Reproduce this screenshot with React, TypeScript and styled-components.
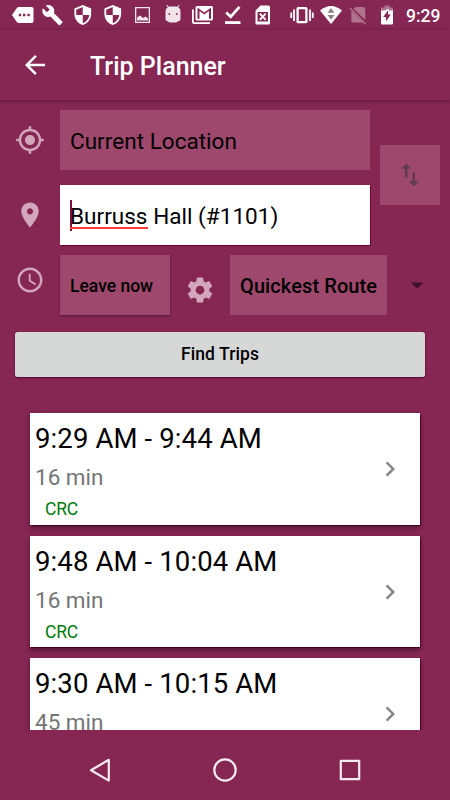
import React from "react";
import styled, { createGlobalStyle } from "styled-components";

const GlobalStyle = createGlobalStyle`
  * { box-sizing: border-box; }
  html, body { margin: 0; padding: 0; background: #862653; }
  body { font-family: Roboto, "Liberation Sans", sans-serif; }
  button, input { font-family: inherit; border: 0; margin: 0; padding: 0; border-radius: 0; }
`;

const Screen = styled.div`
  display: flex;
  flex-direction: column;
  width: 450px;
  height: 800px;
  overflow: hidden;
  background: #862653;
  color: #000;
`;

const StatusBar = styled.div`
  display: flex;
  align-items: center;
  flex: 0 0 30px;
  height: 30px;
  padding-left: 8px;
`;

const StatusSvg = styled.svg<{ $gap?: number; $opacity?: number }>`
  flex: none;
  width: 30px;
  height: 30px;
  margin-left: ${(p) => p.$gap ?? 0}px;
  opacity: ${(p) => p.$opacity ?? 1};
  fill: #fff;
`;

const Clock = styled.span`
  margin-left: 4px;
  padding-top: 2px;
  color: #fff;
  font-size: 17.5px;
  font-weight: 500;
  line-height: 28px;
`;

const AppBar = styled.header`
  display: flex;
  align-items: center;
  flex: 0 0 70px;
  padding: 0 20px;
  gap: 40px;
  box-shadow: 0 1px 4px rgba(0, 0, 0, 0.4);
`;

const BackButton = styled.button`
  display: flex;
  background: none;
`;

const Title = styled.h1`
  margin: 0;
  padding-top: 3px;
  color: #fff;
  font-size: 25px;
  font-weight: 500;
  line-height: 30px;
`;

const Planner = styled.main`
  display: flex;
  flex: 0 0 630px;
  flex-direction: column;
  height: 630px;
  padding: 10px 10px 0 15px;
  overflow: hidden;
`;

const Places = styled.div`
  display: flex;
  align-items: center;
  gap: 10px;
  margin-bottom: 10px;
`;

const PlaceFields = styled.div`
  display: flex;
  flex-direction: column;
  gap: 15px;
`;

const FieldRow = styled.label`
  display: flex;
  align-items: center;
  gap: 15px;
`;

const Glyph = styled.svg<{ $size?: number; $color?: string; $drop?: number }>`
  flex: none;
  display: block;
  width: ${(p) => p.$size ?? 30}px;
  height: ${(p) => p.$size ?? 30}px;
  margin-top: ${(p) => p.$drop ?? 0}px;
  fill: ${(p) => p.$color ?? "#d3a6bb"};
`;

const Field = styled.div<{ $focused?: boolean }>`
  display: flex;
  align-items: center;
  width: 310px;
  height: 60px;
  padding: 2px 10px 0;
  background: ${(p) => (p.$focused ? "#fff" : "#9d486c")};
  box-shadow: ${(p) => (p.$focused ? "0 0 1px 0.5px #6e0034" : "none")};
  font-size: 22.5px;
  letter-spacing: 0.03px;
  white-space: pre;
`;

const Caret = styled.span`
  width: 2px;
  height: 31px;
  margin: -2px -2px 0 0;
  background: #80103f;
`;

const Misspelled = styled.span`
  height: 26px;
  border-bottom: 2px solid #fb3a3c;
  line-height: 26px;
`;

const SwapButton = styled.button`
  display: flex;
  align-items: center;
  justify-content: center;
  width: 60px;
  height: 60px;
  margin-top: -5px;
  background: #9d486c;
`;

const Options = styled.div`
  display: flex;
  align-items: flex-start;
  height: 60px;
  gap: 15px;
`;

const OptionButton = styled.button<{ $width: number; $size: number; $spacing?: number; $raised?: boolean }>`
  width: ${(p) => p.$width}px;
  height: 60px;
  padding: 2px 0 0 10px;
  background: #9d486c;
  box-shadow: ${(p) => (p.$raised ? "0 1px 2px rgba(0, 0, 0, 0.4)" : "none")};
  color: #000;
  font-size: ${(p) => p.$size}px;
  font-weight: 500;
  letter-spacing: ${(p) => p.$spacing ?? 0}px;
  text-align: left;
  white-space: nowrap;
`;

const FindButton = styled.button`
  flex: none;
  width: 410px;
  height: 45px;
  margin-top: 16.5px;
  border-radius: 2.5px;
  background: #d6d8d7;
  box-shadow: 0 1px 2px #56082f, 0 0 1px #6e0034;
  color: #000;
  font-size: 17.5px;
  font-weight: 500;
  letter-spacing: 0.08px;
`;

const Results = styled.div`
  display: flex;
  flex: 0 0 353.5px;
  flex-direction: column;
  gap: 11px;
  width: 425px;
  padding: 36.8px 20px 0 15px;
  overflow: hidden;
`;

const Card = styled.article`
  display: flex;
  flex: 0 0 111.5px;
  align-items: center;
  justify-content: space-between;
  padding: 0 15px 0 5px;
  background: #fff;
  box-shadow: 0 3px 5px rgba(0, 0, 0, 0.42), 0 0 1px 0.5px #65002e;
`;

const Details = styled.div`
  display: flex;
  flex-direction: column;
  align-self: flex-start;
`;

const Times = styled.div`
  height: 43px;
  padding-top: 8px;
  font-size: 27.5px;
  letter-spacing: 0.12px;
  line-height: 36px;
  white-space: nowrap;
`;

const Duration = styled.div`
  height: 38px;
  padding-top: 6px;
  color: #757575;
  font-size: 22.5px;
  line-height: 30px;
`;

const RouteName = styled.div`
  padding: 4px 0 0 10px;
  color: #007a0c;
  font-size: 17.5px;
  letter-spacing: -0.2px;
  line-height: 22px;
`;

const NavBar = styled.nav`
  display: flex;
  align-items: center;
  justify-content: center;
  flex: 0 0 70px;
  gap: 95px;
  padding-top: 10px;
  background: #862653;
`;

const NavSvg = styled.svg`
  width: 30px;
  height: 30px;
  fill: none;
  stroke: #f5ebf0;
  stroke-width: 2.2;
  stroke-linejoin: round;
`;

const ARROW_BACK = "M20 11H7.83l5.59-5.59L12 4l-8 8 8 8 1.41-1.41L7.83 13H20v-2z";
const GPS =
  "M12 8c-2.21 0-4 1.79-4 4s1.79 4 4 4 4-1.79 4-4-1.79-4-4-4zm8.94 3c-.46-4.17-3.77-7.48-7.94-7.94V1h-2v2.06C6.83 3.52 3.52 6.83 3.06 11H1v2h2.06c.46 4.17 3.77 7.48 7.94 7.94V23h2v-2.06c4.17-.46 7.48-3.77 7.94-7.94H23v-2h-2.06zM12 19c-3.87 0-7-3.13-7-7s3.13-7 7-7 7 3.13 7 7-3.13 7-7 7z";
const PIN =
  "M12 2C8.13 2 5 5.13 5 9c0 5.25 7 13 7 13s7-7.75 7-13c0-3.87-3.13-7-7-7zm0 9.5c-1.38 0-2.5-1.12-2.5-2.5s1.12-2.5 2.5-2.5 2.5 1.12 2.5 2.5-1.12 2.5-2.5 2.5z";
const TIME =
  "M11.99 2C6.47 2 2 6.48 2 12s4.47 10 9.99 10C17.52 22 22 17.52 22 12S17.52 2 11.99 2zM12 20c-4.42 0-8-3.58-8-8s3.58-8 8-8 8 3.58 8 8-3.58 8-8 8zm.5-13H11v6l5.25 3.15.75-1.23-4.5-2.67z";
const GEAR =
  "M19.43 12.98c.04-.32.07-.64.07-.98s-.03-.66-.07-.98l2.11-1.65c.19-.15.24-.42.12-.64l-2-3.46c-.12-.22-.39-.3-.61-.22l-2.49 1c-.52-.4-1.08-.73-1.69-.98l-.38-2.65C14.46 2.18 14.25 2 14 2h-4c-.25 0-.46.18-.49.42l-.38 2.65c-.61.25-1.17.59-1.69.98l-2.49-1c-.23-.09-.49 0-.61.22l-2 3.46c-.13.22-.07.49.12.64l2.11 1.65c-.04.32-.07.65-.07.98s.03.66.07.98l-2.11 1.65c-.19.15-.24.42-.12.64l2 3.46c.12.22.39.3.61.22l2.49-1c.52.4 1.08.73 1.69.98l.38 2.65c.03.24.24.42.49.42h4c.25 0 .46-.18.49-.42l.38-2.65c.61-.25 1.17-.59 1.69-.98l2.49 1c.23.09.49 0 .61-.22l2-3.46c.12-.22.07-.49-.12-.64l-2.11-1.65zM12 15.5c-1.93 0-3.5-1.57-3.5-3.5s1.57-3.5 3.5-3.5 3.5 1.57 3.5 3.5-1.57 3.5-3.5 3.5z";
const SWAP = "M16 17.01V10h-2v7.01h-3L15 21l4-3.99h-3zM9 3L5 6.99h3V14h2V6.99h3L9 3z";
const CHEVRON = "M10 6L8.59 7.41 13.17 12l-4.58 4.59L10 18l6-6z";
const WRENCH =
  "M22.7 19l-9.1-9.1c.9-2.3.4-5-1.5-6.9-2-2-5-2.4-7.4-1.3L9 6 6 9 1.6 4.7C.4 7.1.9 10.1 2.9 12.1c1.9 1.9 4.6 2.4 6.9 1.5l9.1 9.1c.4.4 1 .4 1.4 0l2.3-2.3c.5-.4.5-1.1.1-1.4z";
const SHIELD =
  "M12 1L3 5v6c0 5.55 3.84 10.74 9 12 5.16-1.26 9-6.45 9-12V5l-9-4zm0 10.99h7c-.53 4.12-3.28 7.79-7 8.94V12H5V6.3l7-3.11v8.8z";

const Icon = ({ d, ...rest }: { d: string; $size?: number; $color?: string; $drop?: number }) => (
  <Glyph viewBox="0 0 24 24" {...rest}>
    <path d={d} />
  </Glyph>
);

const ShieldIcon = () => (
  <StatusSvg viewBox="0 0 30 30">
    <path transform="translate(3.6 4) scale(.93 .91)" fillRule="evenodd" d={SHIELD} />
  </StatusSvg>
);

const StatusIcons = () => (
  <>
    <StatusSvg viewBox="0 0 30 30">
      <path
        fillRule="evenodd"
        d="M4 15L8.8 8Q9.6 7 11 7H23.6Q25.5 7 25.5 8.8V21.2Q25.5 23 23.6 23H11Q9.6 23 8.8 22ZM10.8 13.8v2.4h2.4v-2.4zM15 13.8v2.4h2.4v-2.4zM19.4 13.8v2.4h2.4v-2.4z"
      />
    </StatusSvg>
    <StatusSvg viewBox="0 0 30 30">
      <path transform="translate(3.4 4) scale(.92)" d={WRENCH} />
    </StatusSvg>
    <ShieldIcon />
    <ShieldIcon />
    <StatusSvg viewBox="0 0 30 30" $opacity={0.88}>
      <path fillRule="evenodd" d="M7 7H22V23H7ZM8.3 8.3V21.7H20.7V8.3Z" />
      <path d="M9 20.5V17.5L12 15.5 15 18 17.5 16.5 20 18.5V20.5Z" />
    </StatusSvg>
    <StatusSvg viewBox="0 0 30 30">
      <path d="M8.8 5L11 8M21.2 5L19 8" stroke="#fff" strokeWidth="1" />
      <path
        opacity=".88"
        fillRule="evenodd"
        d="M7.5 12Q7.5 7 12 6.5H18Q22.5 7 22.5 12V19Q22.5 20.5 21 21L18 22.5H12L9 21Q7.5 20.5 7.5 19ZM10.5 13.3v1.6h1.6v-1.6zM17.9 13.3v1.6h1.6v-1.6z"
      />
    </StatusSvg>
    <StatusSvg viewBox="0 0 30 30">
      <path d="M4 9.5V22Q4 24 6 24H22V22.2H5.8V9.5Z" />
      <path
        fillRule="evenodd"
        d="M9 6H23.5Q25 6 25 7.5V19Q25 20.5 23.5 20.5H9Q7.5 20.5 7.5 19V7.5Q7.5 6 9 6ZM9.5 8V18.7H11.5V11L16.3 14.6 21 11V18.7H23V8H22.5L16.3 12.6 10 8Z"
      />
    </StatusSvg>
    <StatusSvg viewBox="0 0 30 30">
      <path d="M8.2 12.5L12.7 16.7 21.5 6.8" fill="none" stroke="#fff" strokeWidth="2.7" />
      <path d="M7 21.2H22.5V24H7Z" />
    </StatusSvg>
    <StatusSvg viewBox="0 0 30 30">
      <path fillRule="evenodd" d="M12.5 5.5H20.5Q22 5.5 22 7V23Q22 24.5 20.5 24.5H9Q7.5 24.5 7.5 23V10.5ZM9.5 12V21.5H20V12Z" />
      <path d="M11.8 13.7L17.7 19.8M17.7 13.7L11.8 19.8" stroke="#fff" strokeWidth="1.8" />
    </StatusSvg>
    <StatusSvg viewBox="0 0 30 30" $gap={9}>
      <rect x="10.6" y="8.2" width="8.8" height="14" rx=".5" fill="none" stroke="#fff" strokeWidth="2.3" />
      <path d="M7 9.5V21M23 9.5V21" stroke="#fff" strokeWidth="1.8" />
      <path d="M4.2 12.5V18M25.8 12.5V18" stroke="#fff" strokeWidth="1.8" />
    </StatusSvg>
    <StatusSvg viewBox="0 0 30 30" $gap={-1}>
      <path d="M4 10.5Q15 1.5 26 10.5L15 24Z" />
      <path d="M15 8L18.5 12.8H11.5ZM15 19.7L11.5 15H18.5Z" fill="#8f7d86" />
    </StatusSvg>
    <StatusSvg viewBox="0 0 30 30" $gap={-3} $opacity={0.35}>
      <path d="M13 7H20.5Q22.3 7 22.3 9V20L10.5 8.7ZM8.3 11L20.5 22.5H10Q8.3 22.5 8.3 21Z" />
      <path d="M7 8L22.5 24" stroke="#fff" strokeWidth="1.5" />
    </StatusSvg>
    <StatusSvg viewBox="0 0 30 30" $gap={-1}>
      <path d="M12.5 5.5H17.5V7.5H21V11H9V7.5H12.5Z" opacity=".35" />
      <path fillRule="evenodd" d="M9 10.5H12.8L16.6 8.5V10.5H21V23.2Q21 24.5 19.8 24.5H10.2Q9 24.5 9 23.2ZM16 10.2L11.2 17H14V21.5L18.8 14.5H16Z" />
    </StatusSvg>
  </>
);

const trips = [
  { times: "9:29 AM - 9:44 AM", duration: "16 min", route: "CRC" },
  { times: "9:48 AM - 10:04 AM", duration: "16 min", route: "CRC" },
  { times: "9:30 AM - 10:15 AM", duration: "45 min" },
];

export default function App() {
  return (
    <Screen>
      <GlobalStyle />
      <StatusBar>
        <StatusIcons />
        <Clock>9:29</Clock>
      </StatusBar>
      <AppBar>
        <BackButton aria-label="Back">
          <Icon d={ARROW_BACK} $color="#fff" />
        </BackButton>
        <Title>Trip Planner</Title>
      </AppBar>
      <Planner>
        <Places>
          <PlaceFields>
            <FieldRow>
              <Icon d={GPS} />
              <Field>Current Location</Field>
            </FieldRow>
            <FieldRow>
              <Icon d={PIN} />
              <Field $focused>
                <Caret />
                <Misspelled>Burruss</Misspelled> Hall (#1101)
              </Field>
            </FieldRow>
          </PlaceFields>
          <SwapButton aria-label="Swap">
            <Icon d={SWAP} $color="#603a50" />
          </SwapButton>
        </Places>
        <Options>
          <Icon d={TIME} $drop={10} />
          <OptionButton $width={110} $size={17.5} $raised>
            Leave now
          </OptionButton>
          <Icon d={GEAR} $drop={20} />
          <OptionButton $width={157} $size={20} $spacing={0.1}>
            Quickest Route
          </OptionButton>
          <Icon d="M7 10l5 5 5-5z" $color="#3e1229" $drop={15} />
        </Options>
        <FindButton>Find Trips</FindButton>
        <Results>
          {trips.map((trip) => (
            <Card key={trip.times}>
              <Details>
                <Times>{trip.times}</Times>
                <Duration>{trip.duration}</Duration>
                {trip.route && <RouteName>{trip.route}</RouteName>}
              </Details>
              <Icon d={CHEVRON} $color="#858585" />
            </Card>
          ))}
        </Results>
      </Planner>
      <NavBar>
        <NavSvg viewBox="0 0 30 30">
          <path d="M6 15.2L23.8 4.8V25.6Z" />
        </NavSvg>
        <NavSvg viewBox="0 0 30 30">
          <circle cx="15" cy="15" r="10.7" />
        </NavSvg>
        <NavSvg viewBox="0 0 30 30">
          <rect x="5.8" y="5.8" width="18.4" height="18.4" />
        </NavSvg>
      </NavBar>
    </Screen>
  );
}
